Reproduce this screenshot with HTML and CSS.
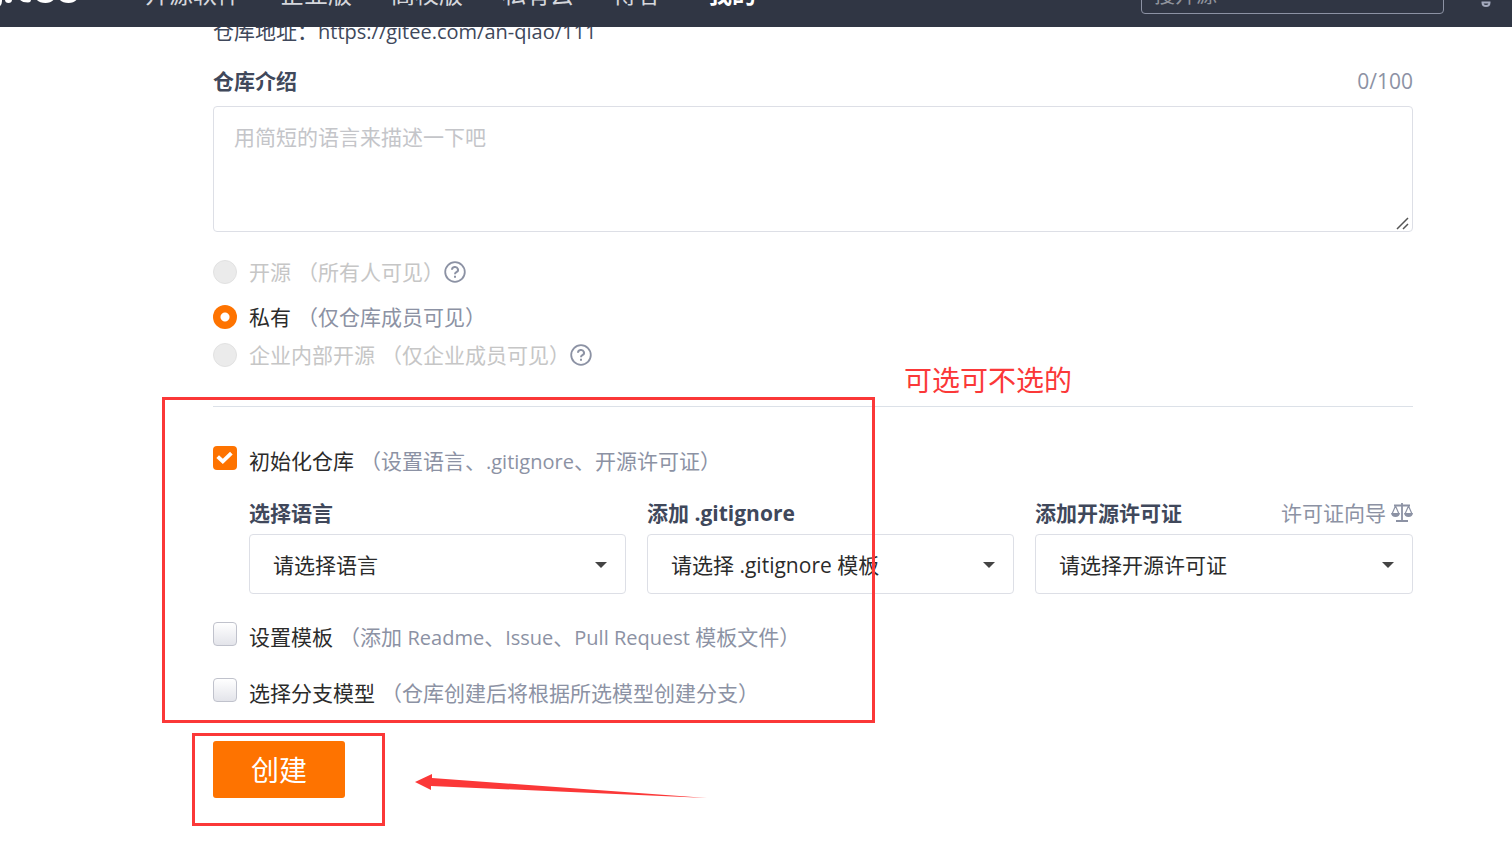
FILE: index.html
```html
<!DOCTYPE html>
<html lang="zh-CN">
<head>
<meta charset="utf-8">
<title>新建仓库 - Gitee</title>
<link rel="stylesheet" href="styles.css">
</head>
<body>
<header class="topbar">
  <a class="logo" href="#" aria-label="gitee">
    <svg width="80" height="66" viewBox="0 0 80 66" fill="none" stroke="#fff" stroke-width="6" stroke-linecap="round">
      <path d="M-1 22V40Q-1 44-6 45"/>
      <path d="M8.500 22V38.500" stroke-width="7"/>
      <path d="M21 14V33Q21 38.500 28 38.500"/>
      <path d="M52 36Q50 39 45.500 39Q37 39 37 30Q37 22 45.500 22Q53 22 53 30H40"/>
      <path d="M75 36Q73 39 68.500 39Q60 39 60 30Q60 22 68.500 22Q76 22 76 30H63"/>
    </svg>
  </a>
  <nav class="nav">
    <a href="#">开源软件</a>
    <a href="#">企业版</a>
    <a href="#">高校版</a>
    <a href="#">私有云</a>
    <a href="#">博客</a>
    <a class="current" href="#">我的</a>
  </nav>
  <input class="search" type="text" placeholder="搜开源" aria-label="搜开源">
  <button class="bell" type="button" aria-label="通知">
    <svg width="20" height="28" viewBox="0 0 20 28" fill="none" stroke="#a3a9bd" stroke-width="2"><path d="M4 17V9a6 6 0 0 1 12 0v8M2 17h16M6.500 22.500h7q0 3.500-3.500 3.500t-3.500-3.500z"/></svg>
  </button>
</header>

<main class="page">
  <form class="form">
    <p class="address">仓库地址：<span class="latin">https://gitee.com/an-qiao/111</span></p>

    <div class="label-row">
      <label class="label" for="intro">仓库介绍</label>
      <span class="muted">0/100</span>
    </div>
    <div class="area">
      <textarea id="intro" placeholder="用简短的语言来描述一下吧"></textarea>
      <svg class="grip" width="14" height="14" viewBox="0 0 14 14" stroke="#555" stroke-width="1.500"><path d="M1 13L12 2M7 13L12 8"/></svg>
    </div>

    <div class="choices">
      <div class="choice off">
        <input class="radio" type="radio" name="visibility" id="v-open" disabled>
        <label for="v-open">开源<span class="hint">（所有人可见）</span></label>
        <svg class="help" width="22" height="22" viewBox="0 0 22 22" fill="none" stroke="#8c92a4" stroke-width="1.800"><circle cx="11" cy="11" r="9.800"/><path d="M8 8.800a3 2.800 0 1 1 4.400 2.400Q11 12 11 13.200M11 14.800v2" stroke-width="2"/></svg>
      </div>
      <div class="choice private">
        <input class="radio" type="radio" name="visibility" id="v-private" checked>
        <label for="v-private">私有<span class="hint">（仅仓库成员可见）</span></label>
      </div>
      <div class="choice off">
        <input class="radio" type="radio" name="visibility" id="v-inner" disabled>
        <label for="v-inner">企业内部开源<span class="hint">（仅企业成员可见）</span></label>
        <svg class="help" width="22" height="22" viewBox="0 0 22 22" fill="none" stroke="#8c92a4" stroke-width="1.800"><circle cx="11" cy="11" r="9.800"/><path d="M8 8.800a3 2.800 0 1 1 4.400 2.400Q11 12 11 13.200M11 14.800v2" stroke-width="2"/></svg>
      </div>
    </div>

    <hr class="rule">

    <div class="options">
      <div class="choice">
        <input class="check" type="checkbox" id="init" checked>
        <label for="init">初始化仓库<span class="hint">（设置语言、<span class="latin">.gitignore</span>、开源许可证）</span></label>
      </div>
      <div class="selects">
        <div class="field">
          <label class="label" for="lang">选择语言</label>
          <select id="lang"><option>请选择语言</option></select>
        </div>
        <div class="field">
          <label class="label" for="ignore">添加 .gitignore</label>
          <select id="ignore"><option>请选择 .gitignore 模板</option></select>
        </div>
        <div class="field">
          <div class="label-row">
            <label class="label" for="license">添加开源许可证</label>
            <a class="guide" href="#">许可证向导
              <svg width="22" height="20" viewBox="0 0 22 20" fill="none" stroke="#8c92a4" stroke-width="1.800"><path d="M11 0V18M3 2.500H19M5 18H17"/><path d="M4.500 3L1.200 10.500M4.500 3L7.800 10.500M17.500 3L14.200 10.500M17.500 3L20.800 10.500" stroke-width="1.200"/><path d="M0 10H9Q8.500 14 4.500 14T0 10zM13 10H22Q21.500 14 17.500 14T13 10z" fill="#8c92a4" stroke="none"/></svg>
            </a>
          </div>
          <select id="license"><option>请选择开源许可证</option></select>
        </div>
      </div>
      <div class="choice spaced">
        <input class="check" type="checkbox" id="tpl">
        <label for="tpl">设置模板<span class="hint">（添加 <span class="latin">Readme</span>、<span class="latin">Issue</span>、<span class="latin">Pull Request</span> 模板文件）</span></label>
      </div>
      <div class="choice spaced">
        <input class="check" type="checkbox" id="branch">
        <label for="branch">选择分支模型<span class="hint">（仓库创建后将根据所选模型创建分支）</span></label>
      </div>
    </div>

    <button class="create" type="button">创建</button>
  </form>

  <div class="mark mark-options"></div>
  <div class="mark mark-create"></div>
  <p class="note">可选可不选的</p>
  <svg class="arrow" width="294" height="26" viewBox="0 0 294 26" fill="#fb3838"><path d="M0 9L17 1V5L292 25L16 13V17z"/></svg>
</main>
</body>
</html>
```
FILE: styles.css
```css
* { box-sizing: border-box; }
body {
  margin: 0;
  background: #fff;
  color: #2b2b2b;
  font: 21px/30px "Open Sans", "Noto Sans CJK SC", sans-serif;
}
a { color: inherit; text-decoration: none; }
p { margin: 0; }
.latin { font-size: 20px; line-height: 1; }

.topbar {
  position: relative;
  z-index: 1;
  display: flex;
  align-items: center;
  height: 66px;
  margin-top: -39px;
  padding-right: 16px;
  background: #303644;
}
.logo { display: flex; margin-right: 65px; }
.nav {
  display: flex;
  flex: 1;
  gap: 39px;
  color: #d5d7dc;
  font-size: 24px;
}
.nav .current { margin-left: 8px; color: #fff; font-weight: 700; }
.search {
  width: 303px;
  height: 40px;
  margin-right: 32px;
  padding: 0 12px;
  border: 1px solid #8c92a4;
  border-radius: 4px;
  background: transparent;
  color: #fff;
  font: inherit;
}
.search::placeholder { color: #8f939c; }
.bell { display: flex; padding: 0; border: 0; background: none; }

.page { position: relative; padding: 0 99px 28px 213px; }
.form { display: flex; flex-direction: column; }
.address { margin-top: -11px; color: #40485b; }
.label-row { display: flex; justify-content: space-between; }
.address + .label-row { margin: 20px 0 10px; }
.label { color: #40485b; font-weight: 700; }
.muted { color: #8c92a4; }

.area { position: relative; display: flex; }
textarea {
  flex: 1;
  height: 126px;
  padding: 15px 20px;
  border: 1px solid #dddfe6;
  border-radius: 4px;
  font: inherit;
  resize: none;
}
textarea::placeholder { color: #c4c5c9; }
.grip { position: absolute; right: 3px; bottom: 2px; }

.choice { display: flex; align-items: center; height: 30px; }
.choice label { margin-left: 12px; }
.choice input { flex: none; width: 24px; height: 24px; margin: 0; appearance: none; }
.hint { margin-left: 6px; color: #8c92a4; }
.choices { display: flex; flex-direction: column; margin-top: 25px; }
.off, .off .hint { color: #c6c6c6; }
.private { margin: 15px 0 8px; }
.radio { border: 1px solid #e2e2e2; border-radius: 50%; background: #ebebeb; }
.radio:checked {
  border: 0;
  background: radial-gradient(circle, #fff 4px, #fe7300 5px);
}
.check {
  align-self: flex-start;
  border: 1px solid #c0c2cc;
  border-radius: 4px;
  background: linear-gradient(#fff, #e3e4ea);
}
.check:checked { position: relative; border: 0; background: #fe7300; }
.check:checked::after {
  content: "";
  position: absolute;
  inset: 0;
  background: #fff;
  clip-path: polygon(14% 50%, 25% 39%, 41% 53%, 71% 24%, 82% 35%, 41% 75%);
}

.rule { width: 100%; height: 1px; margin: 36px 0 0; border: 0; background: #dce1e8; }
.options { display: flex; flex-direction: column; margin-top: 39px; }
.selects {
  display: grid;
  grid-template-columns: 377fr 367fr 378fr;
  gap: 21px;
  margin: 22px 0 28px 36px;
}
.field { position: relative; display: flex; flex-direction: column; gap: 6px; }
.field::after {
  content: "";
  position: absolute;
  right: 19px;
  bottom: 26px;
  border: 6px solid transparent;
  border-top-color: #444;
  border-bottom: 0;
  pointer-events: none;
}
.guide { display: flex; align-items: center; gap: 5px; color: #8c92a4; }
select {
  width: 100%;
  height: 60px;
  padding: 2px 23px 0;
  border: 1px solid #dddfe6;
  border-radius: 4px;
  appearance: none;
  background: #fff;
  color: #2b2b2b;
  font: inherit;
}
.spaced + .spaced { margin-top: 26px; }

.create {
  align-self: flex-start;
  width: 132px;
  height: 57px;
  margin-top: 33px;
  border: 0;
  border-radius: 3px;
  background: #fe7300;
  color: #fff;
  font: 28px/40px "Open Sans", "Noto Sans CJK SC", sans-serif;
}

.mark { position: absolute; border: 3px solid #fb3838; pointer-events: none; }
.mark-options { left: 162px; top: 370px; width: 713px; height: 326px; }
.mark-create { left: 192px; top: 706px; width: 193px; height: 93px; }
.note { position: absolute; left: 904px; top: 333px; color: #fb3838; font-size: 28px; line-height: 40px; }
.arrow { position: absolute; left: 415px; top: 746px; }
```
